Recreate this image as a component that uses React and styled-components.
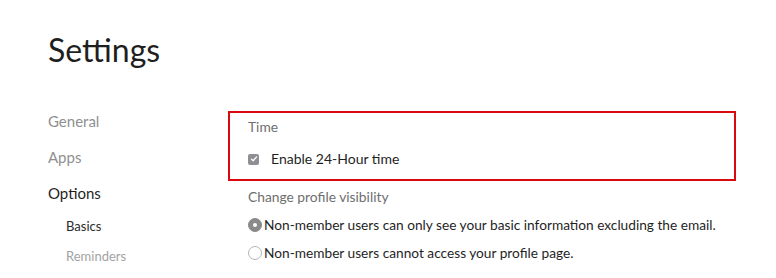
import React from 'react'
import styled, { createGlobalStyle } from 'styled-components'

const GlobalStyle = createGlobalStyle`
  body {
    margin: 0;
    background: #fff;
    font-family: Lato, "Open Sans", sans-serif;
    color: #222;
  }
`

const Page = styled.div`
  padding: 32px 0 0 48px;
`

const Title = styled.h1`
  margin: 0;
  font-size: 32px;
  line-height: 36px;
  font-weight: 400;
  color: #1f1f1f;
`

const Layout = styled.div`
  display: grid;
  grid-template-columns: 180px 508px;
  margin-top: 35px;
  align-items: start;
`

const Nav = styled.nav`
  display: flex;
  flex-direction: column;
`

const NavItem = styled.div`
  font-size: 15px;
  line-height: 36px;
  color: ${p => (p.$active ? '#1f1f1f' : '#8f8f8f')};
`

const SubItem = styled.div`
  padding-left: 18px;
  font-size: 13px;
  line-height: 30px;
  color: ${p => (p.$active ? '#2b2b2b' : '#a3a3a3')};
`

const Content = styled.div`
  padding-top: 8px;
`

const Highlight = styled.section`
  border: 2px solid #d9090f;
  padding: 4px 18px 10px;
`

const Label = styled.div`
  font-size: 13.8px;
  line-height: 20px;
  color: #6e6e6e;
`

const CheckRow = styled.label`
  display: flex;
  align-items: center;
  gap: 12px;
  margin-top: 12px;
  font-size: 14px;
  line-height: 20px;
  color: #1f1f1f;
`

const Box = styled.span`
  width: 11px;
  height: 11px;
  border-radius: 2px;
  background: #8e8e93;
  display: flex;
  align-items: center;
  justify-content: center;
`

const Section = styled.div`
  padding: 6px 0 0 20px;
`

const RadioList = styled.div`
  display: flex;
  flex-direction: column;
  gap: 8px;
  margin-top: 8px;
`

const RadioRow = styled.label`
  display: flex;
  align-items: center;
  gap: 2px;
  font-size: 13.7px;
  line-height: 20px;
  color: #1f1f1f;
`

const Radio = styled.span`
  width: 14px;
  height: 14px;
  border-radius: 50%;
  box-sizing: border-box;
  border: 1px solid ${p => (p.$checked ? '#8a8a8a' : '#b5b5b5')};
  background: ${p => (p.$checked ? '#8a8a8a' : '#fff')};
  display: flex;
  align-items: center;
  justify-content: center;

  &::after {
    content: '';
    display: ${p => (p.$checked ? 'block' : 'none')};
    width: 4px;
    height: 4px;
    border-radius: 50%;
    background: #fff;
  }
`

const App = () => {
  return (
    <Page>
      <GlobalStyle />
      <Title>Settings</Title>
      <Layout>
        <Nav>
          <NavItem>General</NavItem>
          <NavItem>Apps</NavItem>
          <NavItem $active>Options</NavItem>
          <SubItem $active>Basics</SubItem>
          <SubItem>Reminders</SubItem>
        </Nav>
        <Content>
          <Highlight>
            <Label>Time</Label>
            <CheckRow>
              <Box>
                <svg width="8" height="8" viewBox="0 0 8 8">
                  <path d="M1.5 4.2 L3.2 5.8 L6.5 2" fill="none" stroke="#fff" strokeWidth="1.3" strokeLinecap="round" strokeLinejoin="round" />
                </svg>
              </Box>
              Enable 24-Hour time
            </CheckRow>
          </Highlight>
          <Section>
            <Label>Change profile visibility</Label>
            <RadioList>
              <RadioRow>
                <Radio $checked />
                Non-member users can only see your basic information excluding the email.
              </RadioRow>
              <RadioRow>
                <Radio />
                Non-member users cannot access your profile page.
              </RadioRow>
            </RadioList>
          </Section>
        </Content>
      </Layout>
    </Page>
  )
}

export default App
